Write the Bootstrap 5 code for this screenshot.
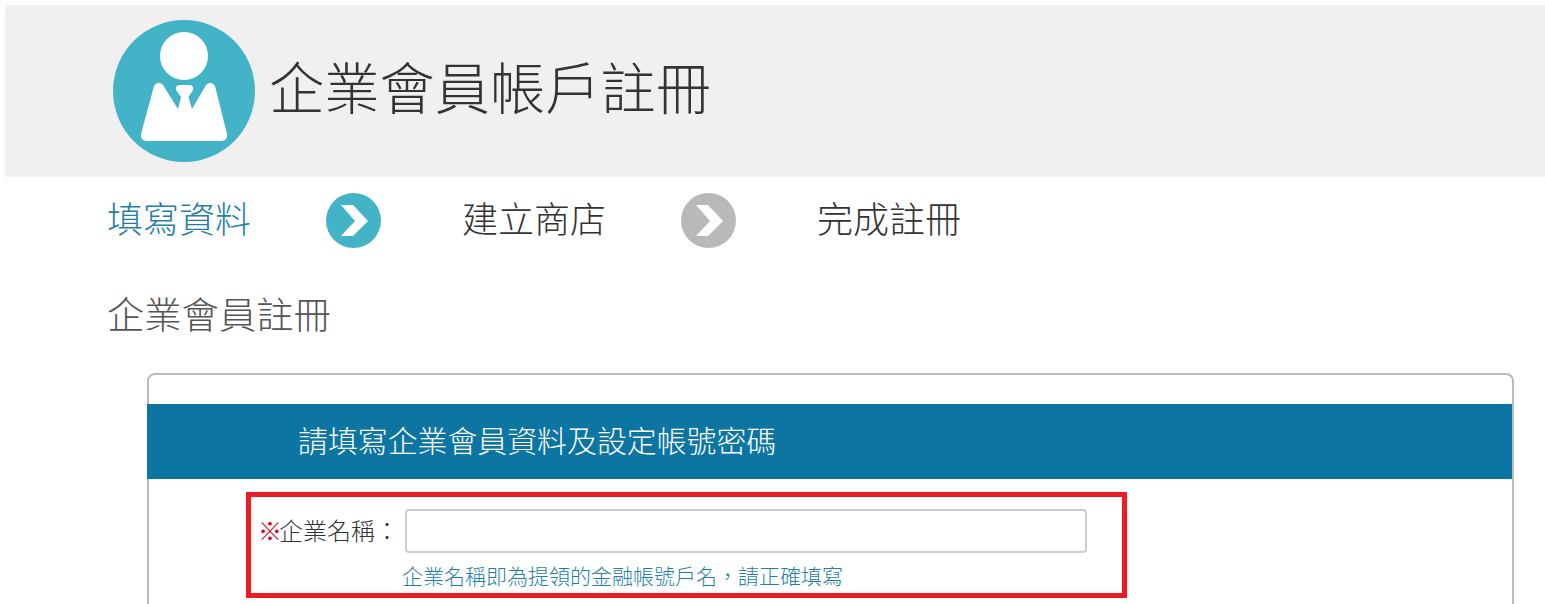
<!DOCTYPE html>
<html lang="zh-Hant">
<head>
    <meta charset="UTF-8">
    <meta name="viewport" content="width=device-width, initial-scale=1.0">
    <title>企業會員帳戶註冊</title>
    <link href="https://cdn.jsdelivr.net/npm/bootstrap@5.3.0/dist/css/bootstrap.min.css" rel="stylesheet">
    <style>
        html, body {
            height: 100%;
            overflow: hidden;
        }
        body {
            background-color: #fff;
            color: #333;
            font-family: "Liberation Sans", "Noto Sans CJK TC", sans-serif;
            font-weight: 300;
            padding: 5px 0 0 5px;
        }
        .page-head {
            background-color: #f1eff0;
            height: 172px;
            padding-left: 108px;
            gap: 14px;
        }
        .page-head h1 {
            font-size: 55.25px;
            font-weight: 300;
            color: #333;
            margin: 0;
            line-height: 1;
        }
        .steps {
            height: 86px;
            padding-left: 102px;
        }
        .step-name {
            font-size: 36px;
            line-height: 1;
            color: #333;
            width: 142px;
            white-space: nowrap;
            padding-top: 2px;
        }
        .step-name.current {
            color: #1f7fa8;
        }
        .step-arrow {
            margin: 0 81px 0 77px;
            flex: none;
        }
        .section-title {
            font-size: 37.3px;
            font-weight: 300;
            line-height: 1;
            color: #555;
            margin: 0 0 38px 102px;
            padding-top: 35px;
        }
        .form-panel {
            margin-left: 142px;
            width: 1367px;
            height: 400px;
            border: 2px solid #bbb;
            border-radius: 8px;
            padding-top: 29px;
        }
        .form-panel-head {
            background-color: #0c75a2;
            color: #fff;
            font-size: 29.9px;
            line-height: 1;
            height: 75px;
            margin-left: -2px;
            padding-left: 151px;
        }
        .name-box {
            margin: 13px 0 0 97px;
            width: 881px;
            height: 106px;
            border: 5px solid #ed1c24;
            padding: 12px 0 0 9px;
        }
        .field-label {
            font-size: 24px;
            line-height: 1;
            color: #333;
            white-space: nowrap;
            width: 145px;
            padding: 1px 0 0 1px;
        }
        .req {
            color: #d8001c;
            margin: 0 -3px;
        }
        .name-input {
            width: 682px;
            height: 44px;
            border: 2px solid #ccc;
            border-radius: 4px;
        }
        .field-hint {
            font-size: 21px;
            line-height: 1;
            color: #1f7fa8;
            margin: 13px 0 0 142px;
            white-space: nowrap;
        }
    </style>
</head>
<body>
    <header class="page-head d-flex align-items-center">
        <svg width="142" height="142" viewBox="0 0 142 142" class="flex-shrink-0">
            <circle cx="71" cy="71" r="71" fill="#43b3c8"/>
            <circle cx="71" cy="36" r="24" fill="#fff"/>
            <path d="M41 66 Q45 60 50 65 L65 89 L68 77 L63 70 Q62 65 67 65 L76 65 Q81 65 80 70 L75.5 77 L79 89 L93 65 Q98 60 102 66 L114 114 Q115 121 108 121 L34 121 Q27 121 28 114 Z" fill="#fff"/>
        </svg>
        <h1>企業會員帳戶註冊</h1>
    </header>

    <nav class="steps d-flex align-items-center">
        <span class="step-name current">填寫資料</span>
        <svg class="step-arrow" width="55" height="55" viewBox="0 0 55 55">
            <circle cx="27.5" cy="27.5" r="27.5" fill="#43b3c8"/>
            <path d="M15 12 H27 L42 28 L27 43 H15 L29 28 Z" fill="#fff"/>
        </svg>
        <span class="step-name">建立商店</span>
        <svg class="step-arrow" width="55" height="55" viewBox="0 0 55 55">
            <circle cx="27.5" cy="27.5" r="27.5" fill="#b9b9b9"/>
            <path d="M15 12 H27 L42 28 L27 43 H15 L29 28 Z" fill="#fff"/>
        </svg>
        <span class="step-name">完成註冊</span>
    </nav>

    <h2 class="section-title">企業會員註冊</h2>

    <section class="form-panel">
        <div class="form-panel-head d-flex align-items-center">請填寫企業會員資料及設定帳號密碼</div>
        <div class="name-box">
            <div class="d-flex align-items-center">
                <label class="field-label" for="companyName"><span class="req">※</span>企業名稱：</label>
                <input id="companyName" class="name-input form-control" type="text">
            </div>
            <div class="field-hint">企業名稱即為提領的金融帳號戶名，請正確填寫</div>
        </div>
    </section>

    <script src="https://cdn.jsdelivr.net/npm/bootstrap@5.3.0/dist/js/bootstrap.bundle.min.js"></script>
</body>
</html>
